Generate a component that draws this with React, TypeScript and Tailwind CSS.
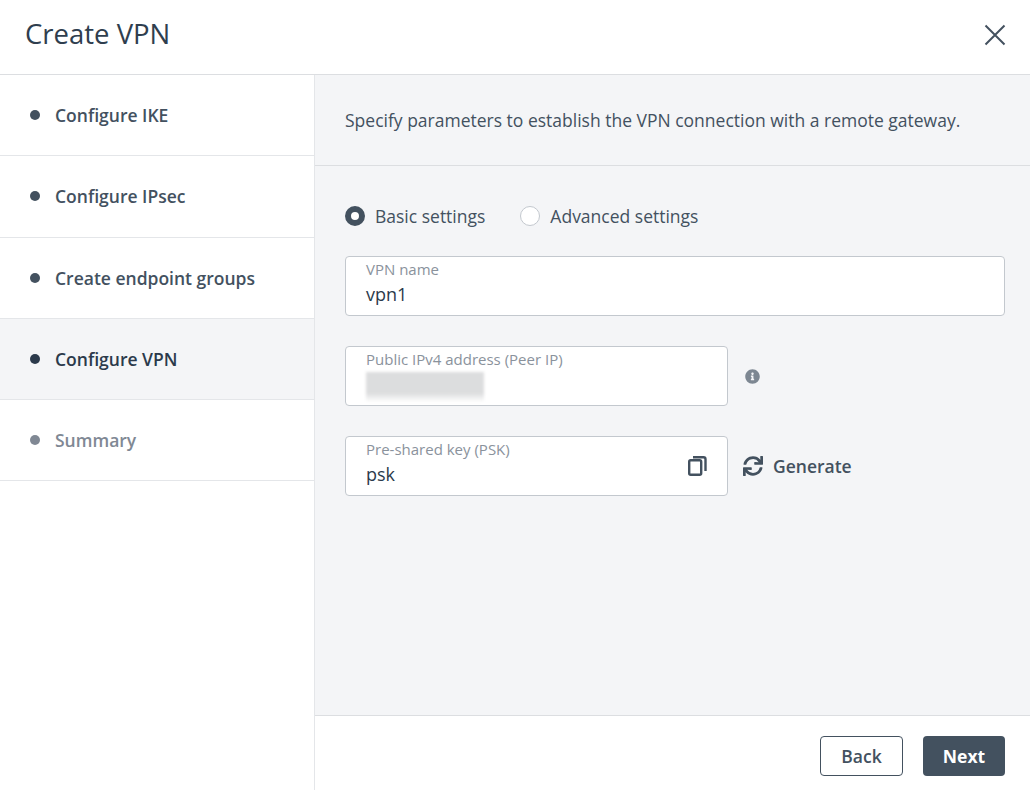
import { FaInfoCircle, FaSync } from "react-icons/fa";

const steps = [
  { label: "Configure IKE", h: "h-[81px]", text: "text-[#43515f]", dot: "bg-[#43515f]" },
  { label: "Configure IPsec", h: "h-[82px] pb-[2px]", text: "text-[#43515f]", dot: "bg-[#43515f]" },
  { label: "Create endpoint groups", h: "h-[81px]", text: "text-[#43515f]", dot: "bg-[#43515f]" },
  { label: "Configure VPN", h: "h-[81px]", text: "text-[#2b3a4b]", dot: "bg-[#2b3a4b]", active: true },
  { label: "Summary", h: "h-[81px]", text: "text-[#808894]", dot: "bg-[#808894]" },
];

function Field({ label, value, className, children }: { label: string; value?: string; className: string; children?: React.ReactNode }) {
  return (
    <div className={`relative h-[60px] rounded-[4px] border border-[#c3c8ce] bg-white pl-[20px] ${className}`}>
      <div className="pt-[3px] text-[15px] leading-[19px] text-[#8a929c]">{label}</div>
      {value && <div className="mt-[3px] text-[18px] leading-[25px] text-[#2b3a4b]">{value}</div>}
      {children}
    </div>
  );
}

export default function App() {
  return (
    <div className="flex h-[790px] w-[1030px] flex-col overflow-hidden bg-white font-['Open_Sans',sans-serif]">
      <header className="flex h-[75px] shrink-0 items-center justify-between border-b border-[#dcdee1] pl-[25px] pr-[24px]">
        <h1 className="mb-[7px] text-[27.5px] font-normal leading-[36px] text-[#2f3e4e]">Create VPN</h1>
        <button className="mb-[4px]" aria-label="Close">
          <svg width="22" height="22" viewBox="0 0 22 22" fill="none" stroke="#43515f" strokeWidth="2">
            <path d="M1.5 1.5 20.5 20.5M20.5 1.5 1.5 20.5" />
          </svg>
        </button>
      </header>

      <div className="flex min-h-0 flex-1">
        <nav className="w-[315px] shrink-0 border-r border-[#e4e6e9]">
          {steps.map((s) => (
            <div
              key={s.label}
              className={`flex items-center border-b border-[#e4e6e9] pl-[30px] ${s.h} ${s.active ? "bg-[#f4f5f7]" : ""}`}
            >
              <span className={`h-[10px] w-[10px] rounded-full ${s.dot}`} />
              <span className={`ml-[15px] text-[17.5px] font-semibold leading-[24px] ${s.text}`}>{s.label}</span>
            </div>
          ))}
        </nav>

        <main className="flex min-w-0 flex-1 flex-col">
          <div className="flex h-[91px] shrink-0 items-center border-b border-[#dcdee1] bg-[#f4f5f7] pl-[30px]">
            <p className="text-[17.5px] leading-[24px] text-[#43515f]">
              Specify parameters to establish the VPN connection with a remote gateway.
            </p>
          </div>

          <div className="min-h-0 flex-1 bg-[#f4f5f7] pl-[30px] pr-[25px] pt-[38px]">
            <div className="flex h-[24px] items-center text-[17.5px] text-[#43515f]">
              <span className="h-[20px] w-[20px] rounded-full border-[6px] border-[#43515f] bg-white" />
              <span className="ml-[10px]">Basic settings</span>
              <span className="ml-[35px] h-[20px] w-[20px] rounded-full border border-[#c3c8ce] bg-white" />
              <span className="ml-[10px]">Advanced settings</span>
            </div>

            <Field label="VPN name" value="vpn1" className="mt-[28px] w-[660px]" />

            <div className="mt-[30px] flex items-center">
              <Field label="Public IPv4 address (Peer IP)" className="w-[383px]">
                <div className="mt-[3px] h-[30px] w-[118px] bg-gradient-to-b from-[#dcddde] from-70% to-white blur-[1.5px]" />
              </Field>
              <FaInfoCircle className="ml-[17px] text-[15px] text-[#7d8792]" />
            </div>

            <div className="mt-[30px] flex items-center">
              <Field label="Pre-shared key (PSK)" value="psk" className="w-[383px]">
                <svg
                  className="absolute right-[20px] top-[19px]"
                  width="19"
                  height="20"
                  viewBox="0 0 19 20"
                  fill="none"
                  stroke="#43515f"
                  strokeWidth="2.4"
                >
                  <rect x="1.2" y="4.2" width="12" height="14.600" rx="1.5" />
                  <path d="M5 1.200h10.500a2 2 0 0 1 2 2V15" />
                </svg>
              </Field>
              <FaSync className="ml-[15px] text-[20px] text-[#43515f]" />
              <span className="ml-[10px] text-[17.5px] font-semibold text-[#43515f]">Generate</span>
            </div>
          </div>

          <footer className="flex h-[75px] shrink-0 items-center justify-end gap-[20px] border-t border-[#dcdee1] bg-white pr-[25px] pt-[6px]">
            <button className="h-[40px] w-[83px] rounded-[4px] border border-[#43515f] bg-white text-[17.5px] font-semibold text-[#43515f]">
              Back
            </button>
            <button className="h-[40px] w-[82px] rounded-[4px] bg-[#43515f] text-[17.5px] font-bold text-white">
              Next
            </button>
          </footer>
        </main>
      </div>
    </div>
  );
}
